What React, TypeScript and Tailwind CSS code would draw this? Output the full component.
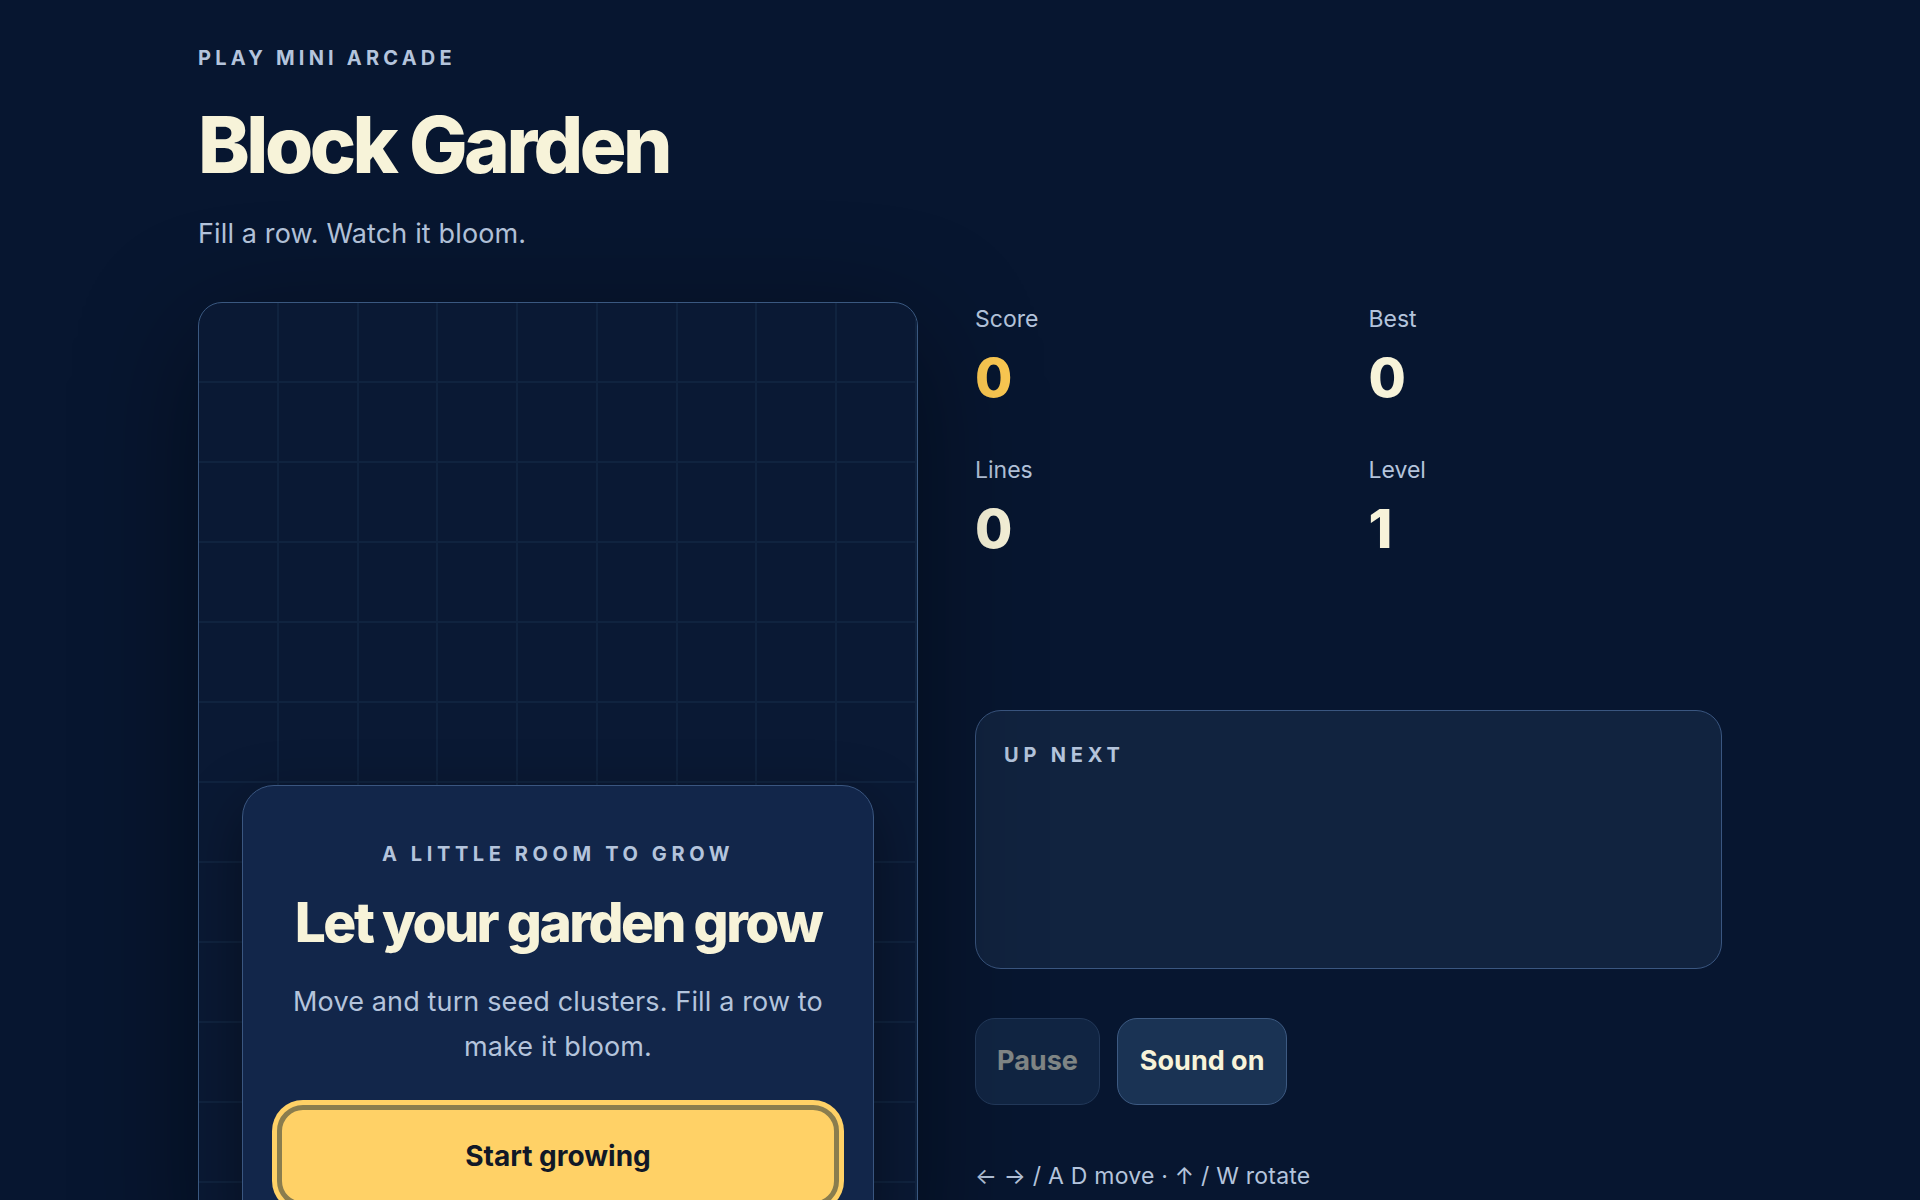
import React from 'react';

const stats = [
  { label: 'Score', value: '0', accent: true },
  { label: 'Best', value: '0', accent: false },
  { label: 'Lines', value: '0', accent: false },
  { label: 'Level', value: '1', accent: false },
];

const cells = Array.from({ length: 9 * 12 }, (_, i) => i);

const App = () => {
  return (
    <div className="min-h-screen bg-[#071630] font-['Inter','Liberation_Sans',sans-serif] text-[#f7f3d9]">
      <div className="mx-auto w-[1524px] pt-[46px]">
        <p className="text-[20px] leading-[24px] font-bold tracking-[0.21em] text-[#b4c4dc]">PLAY MINI ARCADE</p>
        <h1 className="mt-[36px] text-[78px] leading-[78px] font-extrabold tracking-[-0.045em] text-[#f7f3d9]">
          Block Garden
        </h1>
        <p className="mt-[32px] text-[27px] leading-[36px] tracking-[0.005em] text-[#b4c4dc]">Fill a row. Watch it bloom.</p>

        <div className="mt-[50px] flex gap-[57px]">
          {/* board */}
          <div className="relative w-[720px] shrink-0 overflow-hidden rounded-[24px] border border-[#3a5880] bg-[#0a1934] shadow-[0_30px_120px_rgba(0,0,0,0.45)]">
            <div className="grid grid-cols-9">
              {cells.map((c) => (
                <div key={c} className="h-[80px] border-r-2 border-b-2 border-[#10233f]" />
              ))}
            </div>

            <div className="absolute left-[43px] right-[43px] top-[482px] rounded-[32px] border border-[#3a5680] bg-[#12264a] px-[34px] pt-[56px] pb-[40px] text-center shadow-[0_20px_60px_rgba(0,0,0,0.4)]">
              <p className="text-[20px] leading-[24px] font-bold tracking-[0.23em] text-[#b4c4dc]">A LITTLE ROOM TO GROW</p>
              <h2 className="mt-[27px] text-[55px] leading-[58px] font-extrabold tracking-[-0.045em] text-[#f7f3d9]">
                Let your garden grow
              </h2>
              <p className="mt-[28px] text-[27px] leading-[45px] tracking-[0.005em] text-[#b4c4dc]">
                Move and turn seed clusters. Fill a row to make it bloom.
              </p>
              <button className="mt-[36px] h-[102px] w-full rounded-[26px] border-[5px] border-[#8a7d4e] bg-[#ffd166] text-[28px] font-bold text-[#111827] shadow-[0_0_0_5px_#ffd166]">
                Start growing
              </button>
            </div>
          </div>

          {/* side panel */}
          <div className="flex-1">
            <div className="grid grid-cols-2 gap-x-10 gap-y-12">
              {stats.map((s) => (
                <div key={s.label}>
                  <p className="text-[23px] leading-[34px] text-[#b4c4dc]">{s.label}</p>
                  <p
                    className={
                      s.accent
                        ? 'mt-[15px] text-[54px] leading-[54px] font-extrabold text-[#fcc952]'
                        : 'mt-[15px] text-[54px] leading-[54px] font-extrabold text-[#f7f3d9]'
                    }
                  >
                    {s.value}
                  </p>
                </div>
              ))}
            </div>

            <div className="mt-[154px] h-[259px] rounded-[26px] border border-[#3a5680] bg-[#11233f] px-[28px] pt-[32px]">
              <p className="text-[20px] leading-[24px] font-bold tracking-[0.24em] text-[#b4c4dc]">UP NEXT</p>
            </div>

            <div className="mt-[49px] flex gap-[17px]">
              <button
                disabled
                className="h-[87px] rounded-[20px] border border-[#3d5a82] bg-[#1a3354] px-[21px] text-[27px] font-bold text-[#f7f3d9] opacity-50"
              >
                Pause
              </button>
              <button className="h-[87px] rounded-[20px] border border-[#3d5a82] bg-[#1a3354] px-[22px] text-[27px] font-bold text-[#f7f3d9]">
                Sound on
              </button>
            </div>

            <p className="mt-[57px] text-[23px] leading-[28px] tracking-[0.01em] text-[#b4c4dc]">← → / A D move · ↑ / W rotate</p>
          </div>
        </div>
      </div>
    </div>
  );
};

export default App;
